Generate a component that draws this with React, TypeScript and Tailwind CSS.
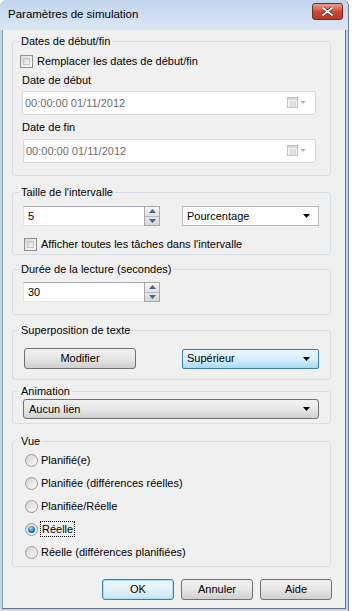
import { useState } from 'react';

const vues = [
  'Planifié(e)',
  'Planifiée (différences réelles)',
  'Planifiée/Réelle',
  'Réelle',
  'Réelle (différences planifiées)',
];

function Groupe({ titre, className, children }: { titre: string; className?: string; children: React.ReactNode }) {
  return (
    <fieldset className={`border border-[#d5dfe5] rounded-[3px] px-0 ${className ?? ''}`}>
      <legend className="ml-[6px] px-[2px] leading-[16px] text-black">{titre}</legend>
      {children}
    </fieldset>
  );
}

function CaseACocher({ label }: { label: string }) {
  return (
    <div className="flex items-center h-[16px] gap-[4px]">
      <span className="w-[13px] h-[13px] border border-[#8e8f8f] bg-gradient-to-br from-[#dcdcdc] to-[#fbfbfb] p-[2px]">
        <span className="block w-full h-full border border-[#c6c6c6] bg-gradient-to-br from-[#d8d8d8] to-[#f4f4f4]" />
      </span>
      <span>{label}</span>
    </div>
  );
}

function ChampDate() {
  return (
    <div className="h-[24px] border border-[#d9d9d9] rounded-[2px] bg-white flex items-center pl-[2px] pr-[6px] text-[#6d6d6d]">
      <span className="flex-1">00:00:00 01/11/2012</span>
      <svg width="22" height="12" viewBox="0 0 22 12">
        <rect x="0.5" y="0.5" width="10" height="10" fill="#f4f4f4" stroke="#c2c2c2" />
        <rect x="1" y="1" width="9" height="2" fill="#d8d8d8" />
        <path d="M2 5h7M2 7h7M2 9h7M4 4v6M6 4v6M8 4v6" stroke="#d4d4d4" strokeWidth="0.8" />
        <path d="M13 4h6l-3 3z" fill="#b8b8b8" />
      </svg>
    </div>
  );
}

function Compteur({ valeur }: { valeur: string }) {
  return (
    <div className="w-[137px] h-[20px] flex border border-[#abadb3] border-l-[#e2e3ea] border-b-[#e3e9ef] border-r-[#dbdfe6] bg-white">
      <span className="flex-1 pl-[4px] leading-[18px]">{valeur}</span>
      <div className="w-[16px] flex flex-col my-[-1px] mr-[-1px] border border-[#a8a8a8]">
        <span className="flex-1 flex items-center justify-center bg-gradient-to-b from-[#f6f6f6] to-[#e2e2e2] border-b border-[#b8b8b8]">
          <svg width="7" height="4" viewBox="0 0 7 4"><path d="M0 4h7L3.5 0z" fill="#4d6185" /></svg>
        </span>
        <span className="flex-1 flex items-center justify-center bg-gradient-to-b from-[#e8e8e8] to-[#d6d6d6]">
          <svg width="7" height="4" viewBox="0 0 7 4"><path d="M0 0h7L3.5 4z" fill="#4d6185" /></svg>
        </span>
      </div>
    </div>
  );
}

function Fleche() {
  return (
    <svg width="7" height="4" viewBox="0 0 7 4" className="shrink-0">
      <path d="M0 0h7L3.5 4z" fill="#000" />
    </svg>
  );
}

function Radio({ label, coche }: { label: string; coche: boolean }) {
  return (
    <div className="flex items-center h-[16px] gap-[3px]">
      <span className="w-[13px] h-[13px] rounded-full border border-[#9a9a9a] bg-gradient-to-br from-[#d2d2d2] to-[#fcfcfc] flex items-center justify-center">
        {coche && <span className="w-[7px] h-[7px] rounded-full bg-[radial-gradient(circle_at_40%_35%,#9fe1ff,#1b6fb0_60%,#0b4f8a)]" />}
      </span>
      <span className={coche ? 'outline outline-1 outline-dotted outline-black leading-[14px] px-[1px]' : ''}>{label}</span>
    </div>
  );
}

export default function App() {
  const [vue] = useState('Réelle');

  return (
    <div className="w-[357px] h-[611px] bg-white text-[11px] text-black" style={{ fontFamily: '"Liberation Sans", Arial, sans-serif' }}>
      <div className="w-[349px] h-[611px] bg-[#c4d6ec] rounded-t-[6px] border-r border-[#6b7a8d] flex flex-col">
        <div className="h-[30px] shrink-0 flex items-center pl-[8px] pr-[5px] bg-gradient-to-b from-[#c2d5ed] to-[#dbe7f5] rounded-t-[6px]">
          <span className="flex-1 text-[11.5px]">Paramètres de simulation</span>
          <span className="w-[31px] h-[17px] mb-[7px] rounded-[3px] border border-[#6d2b26] bg-gradient-to-b from-[#e7a08e] via-[#cc4a33] to-[#b63a24] flex items-center justify-center">
            <svg width="11" height="9" viewBox="0 0 11 9">
              <path d="M1 1l9 7M10 1l-9 7" stroke="#3a1a14" strokeWidth="3" strokeLinecap="round" />
              <path d="M1 1l9 7M10 1l-9 7" stroke="#fff" strokeWidth="1.8" strokeLinecap="round" />
            </svg>
          </span>
        </div>
        <div className="ml-[2px] mr-[2px] h-[579px] bg-[#f0f0f0] border-l border-r border-b border-[#6f6f6f] border-l-[#8a9bb0] pl-[9px] pr-[14px] flex flex-col">
          <Groupe titre="Dates de début/fin" className="mt-[3px] pb-[12px]">
            <div className="pl-[7px] pr-[14px] flex flex-col">
              <div className="mt-[4px]"><CaseACocher label="Remplacer les dates de début/fin" /></div>
              <div className="mt-[3px] leading-[16px] pl-[2px]">Date de début</div>
              <div className="mt-[3px] ml-[2px]"><ChampDate /></div>
              <div className="mt-[4px] leading-[16px] pl-[2px]">Date de fin</div>
              <div className="mt-[4px] ml-[3px]"><ChampDate /></div>
            </div>
          </Groupe>

          <Groupe titre="Taille de l'intervalle" className="mt-[8px] pb-[2px]">
            <div className="pl-[10px] pr-[11px]">
              <div className="mt-[6px] flex items-center justify-between">
                <Compteur valeur="5" />
                <div className="w-[137px] h-[20px] bg-white border border-[#b8b8b8] flex items-center pl-[4px] pr-[8px]">
                  <span className="flex-1">Pourcentage</span>
                  <Fleche />
                </div>
              </div>
              <div className="mt-[10px] pl-[1px]"><CaseACocher label="Afficher toutes les tâches dans l'intervalle" /></div>
            </div>
          </Groupe>

          <Groupe titre="Durée de la lecture (secondes)" className="mt-[6px] pb-[12px]">
            <div className="pl-[10px] mt-[5px]">
              <Compteur valeur="30" />
            </div>
          </Groupe>

          <Groupe titre="Superposition de texte" className="mt-[7px] pb-[10px]">
            <div className="pl-[11px] pr-[11px] mt-[10px] flex items-center justify-between">
              <button className="w-[112px] h-[21px] rounded-[3px] border border-[#707070] bg-gradient-to-b from-[#f2f2f2] via-[#e6e6e6] to-[#cfcfcf]">Modifier</button>
              <div className="w-[137px] h-[20px] rounded-[2px] border border-[#3c7fb1] bg-gradient-to-b from-[#eaf6fd] via-[#d9f0fc] to-[#a7d9f5] flex items-center pl-[4px] pr-[8px]">
                <span className="flex-1">Supérieur</span>
                <Fleche />
              </div>
            </div>
          </Groupe>

          <Groupe titre="Animation" className="mt-[3px] pb-[4px]">
            <div className="pl-[10px] pr-[11px]">
              <div className="h-[20px] rounded-[3px] border border-[#707070] bg-gradient-to-b from-[#f2f2f2] via-[#e8e8e8] to-[#d0d0d0] flex items-center pl-[5px] pr-[8px]">
                <span className="flex-1">Aucun lien</span>
                <Fleche />
              </div>
            </div>
          </Groupe>

          <Groupe titre="Vue" className="mt-[9px] pb-[6px]">
            <div className="pl-[12px] mt-[3px] flex flex-col gap-[7px]">
              {vues.map((v) => (
                <Radio key={v} label={v} coche={v === vue} />
              ))}
            </div>
          </Groupe>

          <div className="mt-[12px] mr-[-1px] flex justify-end gap-[7px]">
            <button className="w-[72px] h-[21px] rounded-[3px] border border-[#3c7fb1] bg-gradient-to-b from-[#eaf6fd] via-[#e4f2fb] to-[#c9e4f5] shadow-[inset_0_0_0_1px_#a9dcf6]">OK</button>
            <button className="w-[72px] h-[21px] rounded-[3px] border border-[#707070] bg-gradient-to-b from-[#f2f2f2] via-[#e6e6e6] to-[#cfcfcf]">Annuler</button>
            <button className="w-[72px] h-[21px] rounded-[3px] border border-[#707070] bg-gradient-to-b from-[#f2f2f2] via-[#e6e6e6] to-[#cfcfcf]">Aide</button>
          </div>
        </div>
      </div>
    </div>
  );
}
